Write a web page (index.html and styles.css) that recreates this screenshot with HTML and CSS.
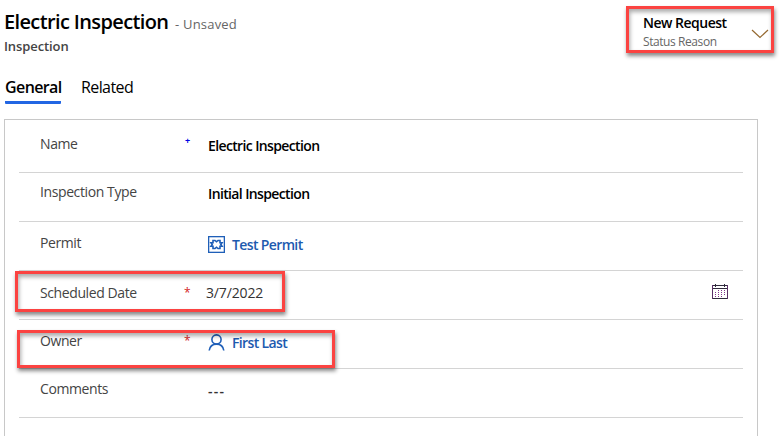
FILE: index.html
```
<!DOCTYPE html>
<html lang="en">
<head>
<meta charset="utf-8">
<title>Electric Inspection</title>
<link rel="stylesheet" href="styles.css">
</head>
<body>
<header class="header">
  <div class="heading">
    <div class="title-line"><h1 class="title">Electric Inspection</h1><span class="unsaved">- Unsaved</span></div>
    <div class="entity">Inspection</div>
  </div>
  <div class="status">
    <div><div class="status-value">New Request</div><div class="status-label">Status Reason</div></div>
    <svg class="chevron" width="18" height="10" viewBox="0 0 18 10"><path d="M1 1l8 7.5L17 1" fill="none" stroke="#94682f" stroke-width="1.2"/></svg>
  </div>
</header>
<nav class="tabs"><span class="tab active">General</span><span class="tab related">Related</span></nav>
<main class="panel">
  <div class="row first"><span class="label">Name</span><span class="mark plus">+</span><span class="value">Electric Inspection</span></div>
  <div class="row type-row"><span class="label">Inspection Type</span><span class="mark"></span><span class="value">Initial Inspection</span></div>
  <div class="row permit-row"><span class="label">Permit</span><span class="mark"></span>
    <svg class="icon" width="17" height="17" viewBox="0 0 17 17" fill="none" stroke="#1f5fb8"><rect x=".6" y=".6" width="15.8" height="15.8" stroke-width="1.4"/><path d="M5 4.5h2l1.5 1.3L10 4.5h2v2.3h2L12.8 8.5 14 10.2h-2v2.3h-2l-1.5-1.3L7 12.5H5v-2.3H3l1.2-1.7L3 6.8h2z" stroke-width="1.6"/></svg>
    <span class="value link">Test Permit</span></div>
  <div class="row date-row"><span class="label">Scheduled Date</span><span class="mark required">*</span><span class="value v-date">3/7/2022</span>
    <svg class="calendar" width="16" height="15" viewBox="0 0 16 15" shape-rendering="crispEdges"><path d="M0 1.5h16M0 4.5h16M0 14.5h16M3.5 0v3M12.5 0v3" fill="none" stroke="#302a3c"/><path d="M.5 1v14M15.5 1v14" stroke="#5b3067"/><path d="M6 6.5h8M3 8.5h11M3 10.5h11M3 12.5h8" stroke="#81348c" stroke-dasharray="1 2"/></svg>
    <i class="highlight highlight-date"></i></div>
  <div class="row owner-row"><span class="label">Owner</span><span class="mark required">*</span>
    <svg class="icon" width="17" height="17" viewBox="0 0 17 17" fill="none" stroke="#1f5fb8" stroke-width="1.6"><circle cx="8.5" cy="5.5" r="4.6"/><path d="M1.2 16.5c.6-4 3.4-6.4 7.3-6.4s6.7 2.4 7.3 6.4"/></svg>
    <span class="value link">First Last</span><i class="highlight highlight-owner"></i></div>
  <div class="row"><span class="label">Comments</span><span class="mark"></span><span class="value v-empty">---</span></div>
</main>
</body>
</html>
```
FILE: styles.css
```
* { box-sizing: border-box; }
html, body { height: 100%; }
body { margin: 0; overflow: hidden; background: #fff; color: #000; font-family: "Open Sans", "Noto Sans", sans-serif; font-size: 14px; display: flex; flex-direction: column; white-space: nowrap; }
.header { height: 78px; flex: none; display: flex; justify-content: space-between; padding: 6px 5px 0 4px; }
.heading { padding-top: 2px; }
.title-line { display: flex; align-items: baseline; gap: 8px; height: 28px; line-height: 28px; }
.title { margin: 0; font-size: 20px; font-weight: 600; letter-spacing: -.63px; width: 163px; }
.unsaved { font-size: 13px; letter-spacing: .2px; color: #666; }
.entity { font-size: 13px; font-weight: 600; letter-spacing: -.1px; color: #444; line-height: 20px; }
.status { width: 148px; height: 47px; border: 3px solid #fb4341; box-shadow: 1px 3px 4px #0007, inset 1px 3px 4px #0005; padding: 4px 2px 0 14px; display: flex; justify-content: space-between; }
.status-value { font-size: 14px; font-weight: 600; line-height: 20px; letter-spacing: -.5px; }
.status-label { font-size: 12px; color: #666; line-height: 18px; letter-spacing: -.42px; }
.chevron { margin-top: 16px; }
.tabs { height: 41px; flex: none; display: flex; gap: 20px; padding-left: 5px; font-size: 16px; line-height: 18px; }
.tab { height: 26px; }
.active { width: 56px; font-weight: 600; letter-spacing: -.6px; border-bottom: 3px solid #2266e3; border-radius: 1px; }
.related { letter-spacing: -.6px; }
.panel { flex: 1; width: 754px; margin-left: 4px; border: 1px solid #c8c8c8; border-bottom: 0; padding: 0 14px; }
.row { height: 49px; border-bottom: 1px solid #d4d4d4; position: relative; display: flex; align-items: flex-start; padding: 10px 0 0 21px; line-height: 20px; }
.first { height: 53px; padding-top: 14px; }
.type-row { padding-top: 9px; }
.label { width: 144px; color: #444; letter-spacing: -.4px; }
.mark { width: 24px; font-size: 12px; line-height: 16px; }
.plus { color: #0000e6; font-size: 9px; font-weight: 700; line-height: 13px; padding-left: 1px; }
.required { color: #d32222; font-size: 12px; line-height: 19px; }
.value { font-weight: 600; letter-spacing: -.63px; margin-top: 2px; }
.permit-row { padding-top: 11px; }
.permit-row .value, .owner-row .value { margin-top: 2px; }
.date-row { padding-top: 12px; }
.owner-row { padding-top: 11px; }
.icon { margin: 3px 7px 0 0; }
.link { color: #1d5aaf; }
.row .v-date { color: #333; font-weight: 400; margin: 0 0 0 -2px; letter-spacing: -.15px; }
.v-empty { color: #333; letter-spacing: 1.2px; }
.calendar { margin: 1px 15px 0 auto; }
.highlight { position: absolute; border: 3px solid #fb4341; box-shadow: 1px 3px 4px #0007, inset 1px 3px 4px #0005; }
.highlight-date { left: -4px; top: 0; width: 270px; height: 41px; }
.highlight-owner { left: -2px; top: 10px; width: 318px; height: 38px; }
```
